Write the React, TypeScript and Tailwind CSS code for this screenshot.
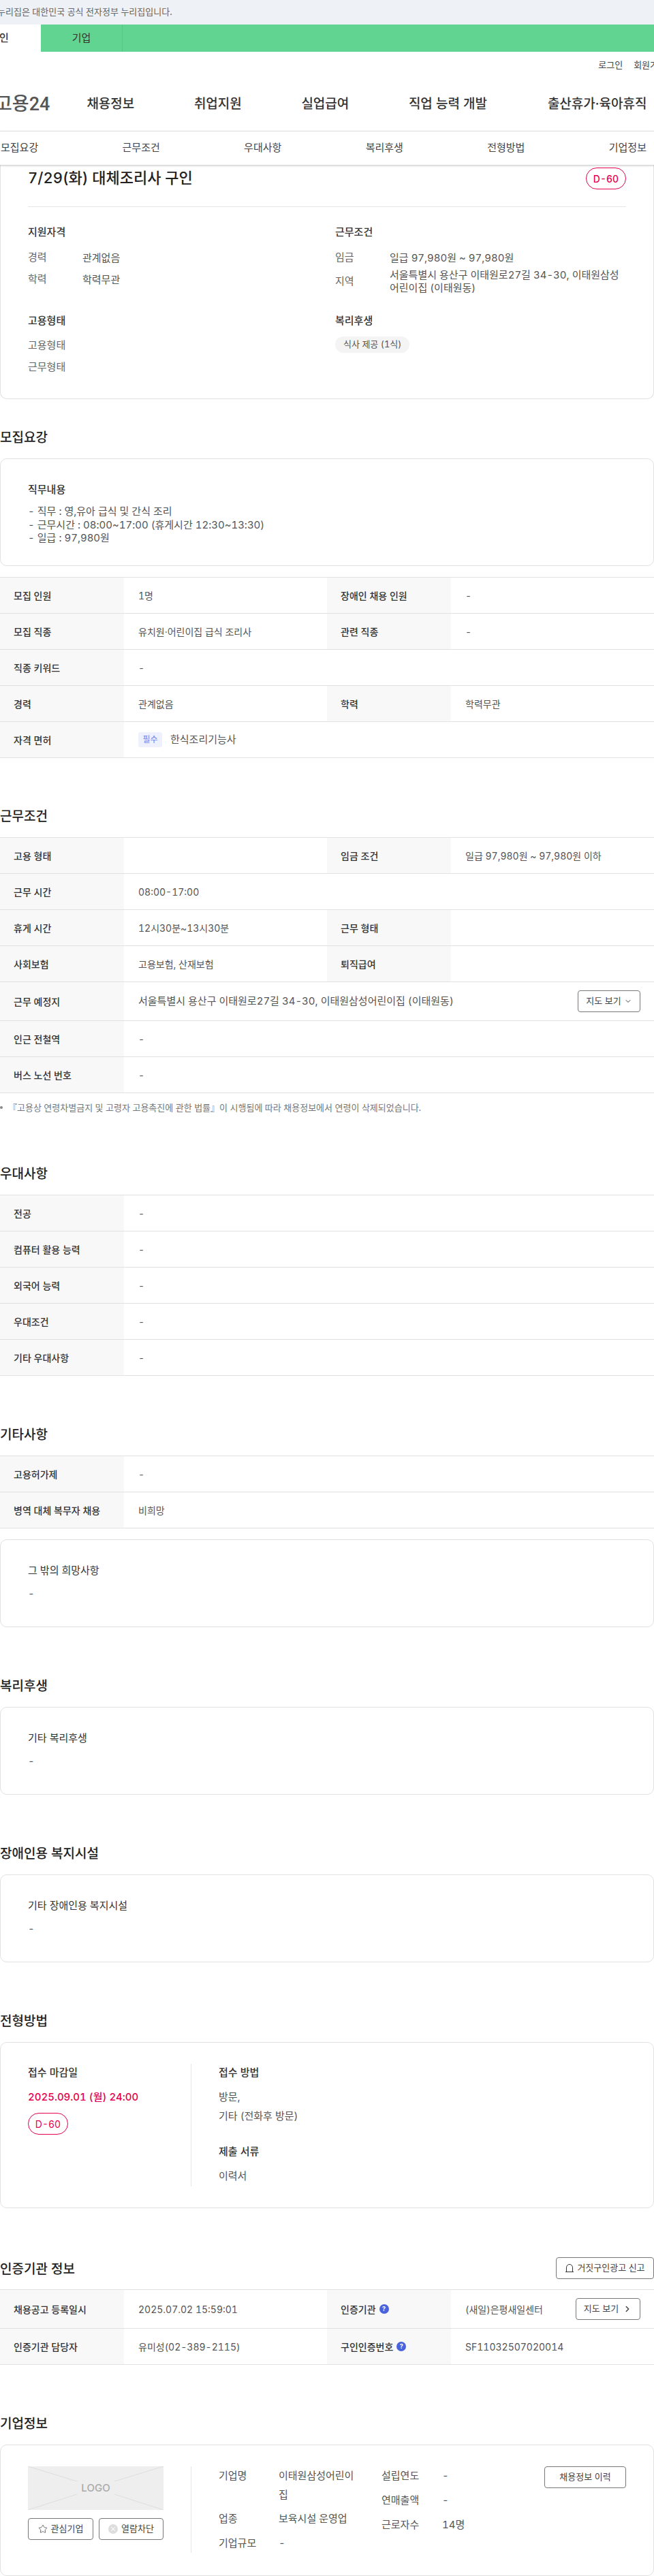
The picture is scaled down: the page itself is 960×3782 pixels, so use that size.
import { ChevronDown, ChevronRight, Star, X } from "lucide-react";
import type { ReactNode } from "react";

const ink = "text-[#333333]";
const grey = "text-[#555555]";

function Heading({ children, className = "" }: { children: ReactNode; className?: string }) {
  return <h2 className={`text-[19px] pt-[3px] leading-[29px] font-medium text-[#222222] ${className}`}>{children}</h2>;
}

function Sub({ children, className = "" }: { children: ReactNode; className?: string }) {
  return <div className={`text-[15px] leading-[22px] font-medium ${ink} ${className}`}>{children}</div>;
}

function Row({ cells, h = "h-[53px]" }: { cells: [ReactNode, ReactNode][]; h?: string }) {
  return (
    <div className={`flex border-b border-[#e1e1e1] ${h}`}>
      {cells.map(([label, value], i) => (
        <div key={i} className={`flex ${cells.length === 1 ? "w-full" : "w-[480px]"}`}>
          <div className={`w-[182px] shrink-0 bg-[#f8f8f8] flex items-center pl-[20px] text-[14px] font-medium ${ink}`}>{label}</div>
          <div className={`flex-1 flex items-center pl-[21px] pr-[20px] text-[14px] ${grey}`}>{value}</div>
        </div>
      ))}
    </div>
  );
}

function Table({ children, className = "" }: { children: ReactNode; className?: string }) {
  return <div className={`border-t border-[#e1e1e1] ${className}`}>{children}</div>;
}

function TextCard({ title, className = "", children }: { title: string; className?: string; children: ReactNode }) {
  return (
    <div className={`border border-[#e1e1e1] rounded-[10px] px-[40px] pt-[34px] h-[129px] ${className}`}>
      <div className={`text-[15px] leading-[22px] ${ink}`}>{title}</div>
      <div className={`mt-[13px] text-[15px] leading-[19px] ${grey}`}>{children}</div>
    </div>
  );
}

function Outline({ children, className = "" }: { children: ReactNode; className?: string }) {
  return (
    <div className={`border border-[#777777] rounded-[4px] bg-white flex items-center justify-center shrink-0 text-[13px] text-[#444444] ${className}`}>
      {children}
    </div>
  );
}

function DBadge({ className = "" }: { className?: string }) {
  return (
    <div className={`w-[59px] h-[32px] rounded-[16px] border border-[#e5004f] text-[#e5004f] bg-white text-[14px] flex items-center justify-center ${className}`}>
      D-60
    </div>
  );
}

function Help() {
  return (
    <span className="ml-[5px] w-[14px] h-[14px] rounded-full bg-[#4a63dd] text-white text-[9px] font-bold flex items-center justify-center">?</span>
  );
}

function Info({ label, value }: { label: string; value: ReactNode }) {
  return (
    <div className="flex items-center min-h-[32px] text-[15px]">
      <div className="w-[80px] shrink-0 text-[#666666]">{label}</div>
      <div className={`flex-1 leading-[19px] ${grey}`}>{value}</div>
    </div>
  );
}

export default function App() {
  return (
    <div className="w-[960px] h-[3782px] overflow-hidden bg-white tabular-nums font-['Inter','Noto_Sans_CJK_KR',sans-serif]">
      <div className="h-[36px] bg-[#eef1f6] flex items-center text-[13px] text-[#666666]">
        <span className="ml-[-4px] whitespace-nowrap">누리집은 대한민국 공식 전자정부 누리집입니다.</span>
      </div>
      <div className="h-[40px] bg-[#62d491] flex text-[15px] text-[#333333]">
        <div className="w-[60px] bg-white flex items-center font-medium">
          <span className="ml-[-1px]">인</span>
        </div>
        <div className="w-[120px] border-r border-[#57c583] flex items-center justify-center">기업</div>
      </div>
      <div className="h-[39px] flex items-center justify-end text-[13px] text-[#444444]">
        <span className="mr-[16px]">로그인</span>
        <span className="mr-[-18px] whitespace-nowrap">회원가입</span>
      </div>
      <div className="h-[78px] border-b border-[#e6e6e6] flex items-center text-[19px] font-medium text-[#333333]">
        <span className="ml-[-7px] w-[134.4px] shrink-0 text-[27px] text-[#555555] whitespace-nowrap font-['Roboto','Noto_Sans_CJK_KR',sans-serif]">고용24</span>
        <span className="w-[157.5px] shrink-0">채용정보</span>
        <span className="w-[157.5px] shrink-0">취업지원</span>
        <span className="w-[157.5px] shrink-0">실업급여</span>
        <span className="w-[204px] shrink-0">직업 능력 개발</span>
        <span className="whitespace-nowrap">출산휴가·육아휴직</span>
      </div>
      <div className="h-[49px] flex items-center justify-between pl-[1px] pr-[11px] text-[15px] text-[#444444] shadow-[0_1px_3px_rgba(0,0,0,0.25)] relative z-10 bg-white">
        <span>모집요강</span>
        <span>근무조건</span>
        <span>우대사항</span>
        <span>복리후생</span>
        <span>전형방법</span>
        <span>기업정보</span>
      </div>

      <div className="border border-t-0 border-[#e1e1e1] rounded-b-[10px] h-[344px] px-[40px]">
        <div className="h-[62px] border-b border-[#e6e6e6] flex justify-between pt-[4px]">
          <div className="text-[22px] leading-[30px] font-medium text-[#222222]">7/29(화) 대체조리사 구인</div>
          <DBadge className="font-medium" />
        </div>
        <div className="flex pt-[26px]">
          <div className="w-[451px]">
            <Sub>지원자격</Sub>
            <div className="mt-[10px]">
              <Info label="경력" value="관계없음" />
              <Info label="학력" value="학력무관" />
            </div>
            <Sub className="mt-[34px]">고용형태</Sub>
            <div className="mt-[9px]">
              <Info label="고용형태" value="" />
              <Info label="근무형태" value="" />
            </div>
          </div>
          <div className="flex-1">
            <Sub>근무조건</Sub>
            <div className="mt-[10px]">
              <Info label="임금" value="일급 97,980원 ~ 97,980원" />
              <Info label="지역" value="서울특별시 용산구 이태원로27길 34-30, 이태원삼성어린이집 (이태원동)" />
            </div>
            <Sub className="mt-[28px]">복리후생</Sub>
            <div className={`mt-[12px] inline-flex h-[24px] items-center px-[12px] rounded-[12px] bg-[#f4f4f4] text-[13px] ${grey}`}>식사 제공 (1식)</div>
          </div>
        </div>
      </div>

      <Heading className="mt-[39px]">모집요강</Heading>
      <div className="mt-[16px] border border-[#e1e1e1] rounded-[10px] h-[158px] px-[40px] pt-[34px]">
        <div className={`text-[15px] leading-[22px] font-medium ${ink}`}>직무내용</div>
        <div className={`mt-[11px] text-[15px] leading-[19.5px] ${grey}`}>
          <div>- 직무 : 영,유아 급식 및 간식 조리</div>
          <div>- 근무시간 : 08:00~17:00 (휴게시간 12:30~13:30)</div>
          <div>- 일급 : 97,980원</div>
        </div>
      </div>
      <Table className="mt-[16px]">
        <Row cells={[["모집 인원", "1명"], ["장애인 채용 인원", "-"]]} />
        <Row cells={[["모집 직종", "유치원·어린이집 급식 조리사"], ["관련 직종", "-"]]} />
        <Row cells={[["직종 키워드", "-"]]} />
        <Row cells={[["경력", "관계없음"], ["학력", "학력무관"]]} />
        <Row
          cells={[
            [
              "자격 면허",
              <div className="flex items-center">
                <span className="w-[35px] h-[22px] rounded-[3px] bg-[#eef1fd] text-[#6b83ea] text-[12px] flex items-center justify-center">필수</span>
                <span className="ml-[12px] text-[15px]">한식조리기능사</span>
              </div>,
            ],
          ]}
        />
      </Table>

      <Heading className="mt-[68px]">근무조건</Heading>
      <Table className="mt-[16px]">
        <Row cells={[["고용 형태", ""], ["임금 조건", "일급 97,980원 ~ 97,980원 이하"]]} />
        <Row cells={[["근무 시간", "08:00-17:00"]]} />
        <Row cells={[["휴게 시간", "12시30분~13시30분"], ["근무 형태", ""]]} />
        <Row cells={[["사회보험", "고용보험, 산재보험"], ["퇴직급여", ""]]} />
        <Row
          h="h-[57px]"
          cells={[
            [
              "근무 예정지",
              <div className="flex items-center justify-between w-full text-[15px]">
                <span>서울특별시 용산구 이태원로27길 34-30, 이태원삼성어린이집 (이태원동)</span>
                <Outline className="w-[92px] h-[32px] gap-[4px]">
                  지도 보기 <ChevronDown size={12} />
                </Outline>
              </div>,
            ],
          ]}
        />
        <Row cells={[["인근 전철역", "-"]]} />
        <Row cells={[["버스 노선 번호", "-"]]} />
      </Table>
      <div className="mt-[11px] text-[13px] leading-[20px] text-[#777777] flex items-center">
        <span className="w-[4px] h-[4px] rounded-full bg-[#888888] mr-[8px]" />
        『고용상 연령차별금지 및 고령자 고용촉진에 관한 법률』이 시행됨에 따라 채용정보에서 연령이 삭제되었습니다.
      </div>

      <Heading className="mt-[70px]">우대사항</Heading>
      <Table className="mt-[16px]">
        <Row cells={[["전공", "-"]]} />
        <Row cells={[["컴퓨터 활용 능력", "-"]]} />
        <Row cells={[["외국어 능력", "-"]]} />
        <Row cells={[["우대조건", "-"]]} />
        <Row cells={[["기타 우대사항", "-"]]} />
      </Table>

      <Heading className="mt-[69px]">기타사항</Heading>
      <Table className="mt-[16px]">
        <Row cells={[["고용허가제", "-"]]} />
        <Row cells={[["병역 대체 복무자 채용", "비희망"]]} />
      </Table>
      <TextCard title="그 밖의 희망사항" className="mt-[16px]">-</TextCard>

      <Heading className="mt-[69px]">복리후생</Heading>
      <TextCard title="기타 복리후생" className="mt-[16px]">-</TextCard>

      <Heading className="mt-[69px]">장애인용 복지시설</Heading>
      <TextCard title="기타 장애인용 복지시설" className="mt-[16px]">-</TextCard>

      <Heading className="mt-[69px]">전형방법</Heading>
      <div className="mt-[16px] border border-[#e1e1e1] rounded-[10px] h-[244px] px-[40px] pt-[31px] flex">
        <div className="w-[240px] h-[180px] border-r border-[#e6e6e6] pt-[2px]">
          <Sub>접수 마감일</Sub>
          <div className="mt-[13px] text-[15px] leading-[24px] font-medium text-[#e5004f]">2025.09.01 (월) 24:00</div>
          <DBadge className="mt-[11px]" />
        </div>
        <div className="pl-[40px] pt-[2px]">
          <Sub>접수 방법</Sub>
          <div className={`mt-[11px] text-[15px] leading-[28px] ${grey}`}>
            <div>방문,</div>
            <div>기타 (전화후 방문)</div>
          </div>
          <Sub className="mt-[27px]">제출 서류</Sub>
          <div className={`mt-[14px] text-[15px] leading-[22px] ${grey}`}>이력서</div>
        </div>
      </div>

      <div className="mt-[72px] h-[32px] flex items-center justify-between">
        <Heading>인증기관 정보</Heading>
        <Outline className="w-[144px] h-[32px] gap-[4px]">
          <svg width="14" height="14" viewBox="0 0 14 14" fill="none" stroke="#333333" strokeWidth="1">
            <path d="M2.5 12.5V6a4.5 4.5 0 0 1 9 0v6.5zM1 12.5h12" />
          </svg>
          거짓구인광고 신고
        </Outline>
      </div>
      <Table className="mt-[15px]">
        <Row
          h="h-[57px]"
          cells={[
            ["채용공고 등록일시", "2025.07.02 15:59:01"],
            [
              <div className="flex items-center">인증기관<Help /></div>,
              <div className="flex items-center justify-between w-full">
                <span>(새일)은평새일센터</span>
                <Outline className="w-[95px] h-[32px] gap-[6px]">
                  지도 보기 <ChevronRight size={14} strokeWidth={2.5} />
                </Outline>
              </div>,
            ],
          ]}
        />
        <Row
          cells={[
            ["인증기관 담당자", "유미성(02-389-2115)"],
            [<div className="flex items-center">구인인증번호<Help /></div>, "SF11032507020014"],
          ]}
        />
      </Table>

      <Heading className="mt-[69px]">기업정보</Heading>
      <div className="mt-[16px] border border-[#e1e1e1] rounded-[10px] h-[193px] px-[40px] pt-[31px] flex">
        <div className="w-[240px] h-[127px] border-r border-[#e6e6e6] shrink-0">
          <div className="w-[199px] h-[64px] bg-[#eeeeee] relative flex items-center justify-center overflow-hidden">
            <svg className="absolute inset-0" width="199" height="64" viewBox="0 0 199 64" stroke="#dddddd" fill="none">
              <path d="M0 0L72 22M199 0L127 22M0 64L72 41M199 64L127 41" />
            </svg>
            <span className="relative text-[15px] font-medium text-[#aaaaaa]">LOGO</span>
          </div>
          <div className="mt-[12px] flex gap-[8px] w-[199px]">
            <Outline className="w-[96px] h-[32px] gap-[5px]">
              <Star size={14} strokeWidth={1.3} />
              관심기업
            </Outline>
            <Outline className="w-[95px] h-[32px] gap-[5px]">
              <span className="w-[14px] h-[14px] rounded-full bg-[#dddddd] flex items-center justify-center">
                <X size={10} color="#ffffff" strokeWidth={2.5} />
              </span>
              열람차단
            </Outline>
          </div>
        </div>
        <div className={`pl-[40px] w-[279px] shrink-0 text-[15px] leading-[28px] ${grey}`}>
          <div className="flex">
            <span className="w-[88px] shrink-0">기업명</span>
            <span className="w-[112px]">이태원삼성어린이집</span>
          </div>
          <div className="flex mt-[7px]">
            <span className="w-[88px] shrink-0">업종</span>
            <span>보육시설 운영업</span>
          </div>
          <div className="flex mt-[8px]">
            <span className="w-[88px] shrink-0">기업규모</span>
            <span>-</span>
          </div>
        </div>
        <div className={`w-[239px] shrink-0 text-[15px] leading-[28px] ${grey}`}>
          <div className="flex"><span className="w-[89px]">설립연도</span><span>-</span></div>
          <div className="flex mt-[8px]"><span className="w-[89px]">연매출액</span><span>-</span></div>
          <div className="flex mt-[8px]"><span className="w-[89px]">근로자수</span><span>14명</span></div>
        </div>
        <Outline className="w-[120px] h-[32px]">채용정보 이력</Outline>
      </div>
    </div>
  );
}
